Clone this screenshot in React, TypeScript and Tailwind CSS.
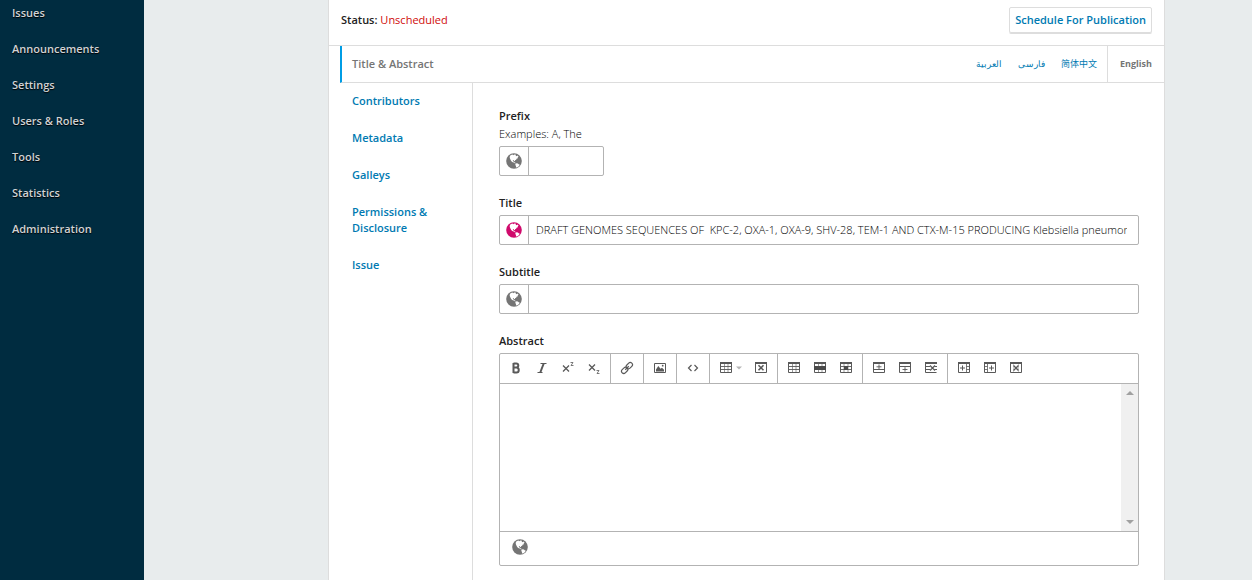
import React, { useState } from 'react';

const Icon: React.FC<{ children: React.ReactNode }> = ({ children }) => (
  <svg width={14} height={14} viewBox="0 0 14 14" fill="none" stroke="#595959" strokeWidth={1} aria-hidden="true">
    {children}
  </svg>
);

const Globe: React.FC<{ className?: string }> = ({ className = 'text-[#757575]' }) => (
  <svg width={16} height={16} viewBox="0 0 16 16" className={className} aria-hidden="true">
    <circle cx={8} cy={8} r={7.800} fill="currentColor" />
    <path
      fill="#fff"
      d="M3.500 3.300 5 2.100 6.600 1.500l.6.8 1.200-.9 1.600.3-.3 1.100.8.5.9-.8 1.300 1.300-1 .3.3 1.100-1.200.4-.7 1.100-1.100.5.1.8-.9-.1-.8-.8-.6.500.4.900.9-.100.200.900.900.300.400.800-.7-.1-1.200-.7-1.500-.5-1-1.100-.9-1.700-.6-1.600.2-1.700Z"
    />
    <path fill="#fff" d="m9.500 10.700 1.100-.4 1.300.3.8.7 1.100.4-1 1.500-1.500 1.100-1.400.3.1-1.500-.7-1.200Z" />
  </svg>
);

const frame = (
  <>
    <path d="M1.500 2v9.500h11V2" />
    <path d="M1 2h12" strokeWidth={2} />
  </>
);

const icons = {
  bold: (
    <Icon>
      <path d="M4.500 2.500h2.700c2.800 0 2.800 4 0 4H4.500m0 0h3c3 0 3 5 0 5h-3m0-9.500v10" strokeWidth={2} />
    </Icon>
  ),
  italic: (
    <Icon>
      <path d="M5.500 2.500h6M2.500 11.500h5" />
      <path d="M8.700 2.500 5.300 11.500" strokeWidth={2} />
    </Icon>
  ),
  superscript: (
    <Icon>
      <path d="m2 4.500 6 6m0-6-6 6" strokeWidth={1.300} />
      <path d="M9.500 1.500H12l-2 3h2.500" strokeWidth={0.800} />
    </Icon>
  ),
  subscript: (
    <Icon>
      <path d="m2 3.500 6 6m0-6-6 6" strokeWidth={1.300} />
      <path d="M9.500 9.500H12l-2 3h2.500" strokeWidth={0.800} />
    </Icon>
  ),
  link: (
    <Icon>
      <g transform="rotate(-45 7 7)" strokeWidth={1.200}>
        <rect x={0.200} y={4.800} width={7} height={4.400} rx={2.200} />
        <rect x={6.800} y={4.800} width={7} height={4.400} rx={2.200} />
        <path d="M4.500 7h5" />
      </g>
    </Icon>
  ),
  image: (
    <Icon>
      <path d="M1.500 2.500h11v9h-11z" />
      <path d="M3 10.500V8.500l2.300-3.500 2.200 2.800L9 6.800l2 2v1.700z" fill="#595959" stroke="none" />
      <circle cx={9.700} cy={4.700} r={0.900} fill="#595959" stroke="none" />
    </Icon>
  ),
  code: (
    <Icon>
      <path d="M5.500 4 2.500 7l3 3m3-6 3 3-3 3" strokeWidth={1.200} />
    </Icon>
  ),
  table: (
    <Icon>
      {frame}
      <path d="M1.500 5.500h11m-11 3h11" strokeWidth={0.900} />
      <path d="M5.500 2v9.500m3.500-9.500v9.500" strokeWidth={0.600} />
    </Icon>
  ),
  tableDelete: (
    <Icon>
      {frame}
      <path d="m4.500 4.300 5 5m0-5-5 5" strokeWidth={1.600} />
    </Icon>
  ),
  tableProps: (
    <Icon>
      {frame}
      <path d="M1.500 5.500h11m-11 3h11" strokeWidth={0.900} />
      <path d="M5.500 2v9.500m3.500-9.500v9.500" strokeWidth={0.600} />
    </Icon>
  ),
  rowProps: (
    <Icon>
      {frame}
      <path d="M5.500 2v9.500m3.500-9.500v9.500" strokeWidth={0.600} />
      <path d="M1 5h12v4H1z" fill="#4a4a4a" stroke="none" />
    </Icon>
  ),
  cellProps: (
    <Icon>
      {frame}
      <path d="M1.500 5.500h11m-11 3h11" strokeWidth={0.900} />
      <path d="M5 2v9.500m4-9.500v9.500" strokeWidth={0.600} />
      <path d="M5 5h4v4H5z" fill="#4a4a4a" stroke="none" />
    </Icon>
  ),
  rowBefore: (
    <Icon>
      {frame}
      <path d="M1.500 8.500h11" />
      <path d="M7 3.500v4.500M4.500 5.800h5" strokeWidth={0.900} />
    </Icon>
  ),
  rowAfter: (
    <Icon>
      {frame}
      <path d="M1.500 5.500h11" />
      <path d="M7 6.200v4.500M4.500 8.500h5" strokeWidth={0.900} />
    </Icon>
  ),
  rowDelete: (
    <Icon>
      <path d="M1.500 2v9.500h11" />
      <path d="M1 2h12" strokeWidth={2} />
      <path d="M1.500 5.500h4.500m-4.500 3h4.500M10.500 5.500h2.500m-2.500 3h2.500" />
      <path d="m6 4.500 5 5m0-5-5 5" strokeWidth={1.200} />
    </Icon>
  ),
  colBefore: (
    <Icon>
      {frame}
      <path d="M9.500 2v9.500m0-6h3m-3 3h3" strokeWidth={0.800} />
      <path d="M5.500 4.500v5M3 7h5" />
    </Icon>
  ),
  colAfter: (
    <Icon>
      {frame}
      <path d="M4.500 2v9.500m-3-6h3m-3 3h3" strokeWidth={0.800} />
      <path d="M8.500 4.500v5M6 7h5" />
    </Icon>
  ),
  colDelete: (
    <Icon>
      {frame}
      <path d="M4.500 2v9.500m5-9.500v9.500" strokeWidth={0.300} />
      <path d="m4.500 4.500 5 5m0-5-5 5" strokeWidth={1.400} />
    </Icon>
  ),
};

const toolbarGroups: { name: keyof typeof icons; label: string; menu?: boolean }[][] = [
  [
    { name: 'bold', label: 'Bold' },
    { name: 'italic', label: 'Italic' },
    { name: 'superscript', label: 'Superscript' },
    { name: 'subscript', label: 'Subscript' },
  ],
  [{ name: 'link', label: 'Insert/edit link' }],
  [{ name: 'image', label: 'Insert/edit image' }],
  [{ name: 'code', label: 'Source code' }],
  [
    { name: 'table', label: 'Table', menu: true },
    { name: 'tableDelete', label: 'Delete table' },
  ],
  [
    { name: 'tableProps', label: 'Table properties' },
    { name: 'rowProps', label: 'Row properties' },
    { name: 'cellProps', label: 'Cell properties' },
  ],
  [
    { name: 'rowBefore', label: 'Insert row before' },
    { name: 'rowAfter', label: 'Insert row after' },
    { name: 'rowDelete', label: 'Delete row' },
  ],
  [
    { name: 'colBefore', label: 'Insert column before' },
    { name: 'colAfter', label: 'Insert column after' },
    { name: 'colDelete', label: 'Delete column' },
  ],
];

const navItems = ['Issues', 'Announcements', 'Settings', 'Users & Roles', 'Tools', 'Statistics', 'Administration'];
const tabs = ['Contributors', 'Metadata', 'Galleys', 'Permissions & Disclosure', 'Issue'];
const locales = ['العربية', 'فارسی', '简体中文'];

interface FieldProps {
  id: string;
  label: string;
  description?: string;
  initial?: string;
  small?: boolean;
}

const Field: React.FC<FieldProps> = ({ id, label, description, initial = '', small }) => {
  const [value, setValue] = useState(initial);

  return (
    <div>
      <label htmlFor={id} className="block font-semibold">
        {label}
      </label>
      {description && <p className="mt-0.5 font-light text-black">{description}</p>}
      <div className={`mt-1 flex h-[30px] rounded-xs border border-[#b3b3b3] ${small ? 'w-[105px]' : ''}`}>
        <span className="flex w-[29px] shrink-0 items-center justify-center border-r border-[#b3b3b3]">
          <Globe className={value ? 'text-[#d00a6c]' : 'text-[#757575]'} />
        </span>
        <input
          id={id}
          type="text"
          value={value}
          onChange={(e) => setValue(e.target.value)}
          className="min-w-0 flex-1 pr-[11px] pl-[7px] font-light text-black outline-none"
        />
      </div>
    </div>
  );
};

const Editor: React.FC = () => (
  <div>
    <label htmlFor="abstract" className="block font-semibold">
      Abstract
    </label>
    <div className="mt-1 rounded-xs border border-[#b3b3b3]">
      <div className="flex h-[30px] border-b border-[#b3b3b3]">
        {toolbarGroups.map((group, index) => (
          <div key={index} className="flex border-r border-[#b3b3b3] px-[3px] last:border-r-0">
            {group.map((item) => (
              <button
                key={item.name}
                type="button"
                aria-label={item.label}
                className={`flex items-center justify-center gap-[3px] pb-px ${item.menu ? 'w-[35px]' : 'w-[26px]'}`}
              >
                {icons[item.name]}
                {item.menu && (
                  <svg width={6} height={4} viewBox="0 0 6 4" aria-hidden="true">
                    <path d="M0 .5h6l-3 3z" fill="#b5b5b5" />
                  </svg>
                )}
              </button>
            ))}
          </div>
        ))}
      </div>
      <div className="flex h-[147px]">
        <textarea id="abstract" className="min-w-0 flex-1 resize-none p-2 outline-none" />
        <div className="flex w-[17px] flex-col items-center justify-between bg-[#f0f0f0] py-[7px]">
          <svg width={8} height={4} viewBox="0 0 8 4" aria-hidden="true">
            <path d="M0 4h8L4 0z" fill="#a0a0a0" />
          </svg>
          <svg width={8} height={4} viewBox="0 0 8 4" aria-hidden="true">
            <path d="M0 0h8L4 4z" fill="#a0a0a0" />
          </svg>
        </div>
      </div>
      <div className="h-[34px] border-t border-[#b3b3b3] pt-[7px] pl-3">
        <Globe />
      </div>
    </div>
  </div>
);

const App: React.FC = () => (
  <div className="flex min-h-screen bg-[#e8eced] font-['Open_Sans','Noto_Sans_CJK_SC',sans-serif] text-[11px] leading-4 text-[#222]">
    {/* Sidebar */}
    <nav className="w-36 shrink-0 bg-[#002c40] pt-[5px]">
      <ul className="flex flex-col gap-5">
        {navItems.map((item) => (
          <li key={item} className="px-3">
            <a href="#" className="font-semibold text-[#d0d3d5] [text-shadow:0_1px_1px_#000]">
              {item}
            </a>
          </li>
        ))}
      </ul>
    </nav>

    <main className="flex min-w-0 flex-1 pr-[87px] pl-[184px]">
      <div className="min-w-0 flex-1 border-x border-[#ddd] bg-white">
        {/* Status bar */}
        <header className="flex h-[46px] items-start justify-between border-b border-[#ddd] px-3 pt-[7px]">
          <div className="pt-[5px]">
            <strong className="font-semibold">Status:</strong> <span className="text-[#d00a0a]">Unscheduled</span>
          </div>
          <button
            type="button"
            className="h-[26px] rounded-xs border border-[#ddd] px-[5px] font-semibold text-[#007ab2] shadow-[0_1px_0_#ddd]"
          >
            Schedule For Publication
          </button>
        </header>

        {/* Active tab and locales */}
        <div className="ml-[11px] flex h-[37px] items-center justify-between border-b border-l-2 border-b-[#ddd] border-l-[#009de5]">
          <button type="button" className="pl-2.5 font-semibold text-[#757575]">
            Title &amp; Abstract
          </button>
          <div className="flex h-full items-center text-[9px]">
            <div className="flex gap-4 pr-2.5">
              {locales.map((locale) => (
                <button key={locale} type="button" className="text-[#007ab2]">
                  {locale}
                </button>
              ))}
            </div>
            <button type="button" className="h-full border-l border-[#ddd] px-3 font-bold text-[#757575]">
              English
            </button>
          </div>
        </div>

        <div className="ml-[11px] flex">
          <div className="w-[133px] shrink-0 border-r border-[#ddd]">
            {tabs.map((tab) => (
              <button
                key={tab}
                type="button"
                className="block w-full pt-2.5 pr-8 pb-[11px] pl-3 text-left font-semibold text-[#007ab2]"
              >
                {tab}
              </button>
            ))}
          </div>

          <form className="flex min-w-0 flex-1 flex-col gap-[19px] pt-[25px] pr-[25px] pb-[14px] pl-[26px]">
            <Field id="prefix" label="Prefix" description="Examples: A, The" small />
            <Field
              id="title"
              label="Title"
              initial="DRAFT GENOMES SEQUENCES OF  KPC-2, OXA-1, OXA-9, SHV-28, TEM-1 AND CTX-M-15 PRODUCING Klebsiella pneumoniae"
            />
            <Field id="subtitle" label="Subtitle" />
            <Editor />
          </form>
        </div>
      </div>
    </main>
  </div>
);

export default App;
